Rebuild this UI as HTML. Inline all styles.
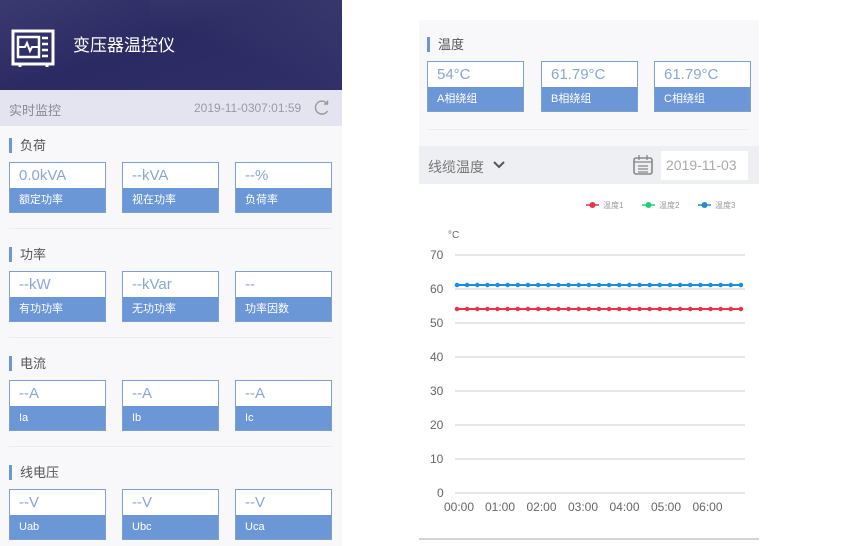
<!DOCTYPE html>
<html><head><meta charset="utf-8"><style>
*{margin:0;padding:0;box-sizing:border-box}
body{width:846px;height:546px;background:#fff;position:relative;overflow:hidden;font-family:"Liberation Sans","Noto Sans CJK SC",sans-serif}
.a{position:absolute}
.box{position:absolute;width:97px;height:51px;border:1px solid #7e9fd0;background:#fff}
.box .v{height:25px;line-height:25px;padding-left:9px;font-size:15px;color:#8aa6d6}
.box .l{position:absolute;left:0;right:0;bottom:0;height:24px;background:#6c97d6;color:#fff;font-size:11px;line-height:24px;padding-left:9px}
.t{position:absolute;font-size:13px;color:#555;padding-left:8px;border-left:3px solid #6c97d6;line-height:15px}
.sep{position:absolute;height:1px;background:#ececf0}
</style></head><body>
<div class="a" style="left:0;top:0;width:342px;height:90px;background:linear-gradient(160deg,#3a3970 0%,#2b2a62 45%,#302f68 100%)"></div>
<div class="a" style="left:150px;top:0;width:200px;height:90px;background:linear-gradient(200deg,rgba(255,255,255,.06),rgba(255,255,255,0) 60%)"></div>
<svg class="a" style="left:11px;top:28px" width="46" height="42" viewBox="0 0 46 42"><rect x="2" y="3" width="40" height="33" fill="none" stroke="#fff" stroke-width="3"/><rect x="7" y="9" width="21" height="20" fill="none" stroke="#fff" stroke-width="2.5"/><path d="M8 19h6l2-4 3 8 2-4h6" fill="none" stroke="#fff" stroke-width="2"/><path d="M31 10h6M31 16h6M31 22h6M31 28h6" stroke="#fff" stroke-width="2.5"/><path d="M9 36v3M36 36v3" stroke="#fff" stroke-width="3"/></svg>
<div class="a" style="left:73px;top:31px;font-size:17px;color:#fff">变压器温控仪</div>
<div class="a" style="left:0;top:90px;width:342px;height:36px;background:#e3e4f0"></div>
<div class="a" style="left:9px;top:100px;font-size:13px;color:#8a8a95">实时监控</div>
<div class="a" style="left:194px;top:101px;font-size:12px;color:#9a9aa5">2019-11-0307:01:59</div>
<svg class="a" style="left:313px;top:99px" width="17" height="17" viewBox="0 0 17 17"><path d="M14 4.5A6.5 6.5 0 1 0 14.5 12" fill="none" stroke="#999" stroke-width="1.4"/><path d="M14.5 1.5v3.5h-3.5" fill="none" stroke="#999" stroke-width="1.4"/></svg>
<div class="a" style="left:0;top:126px;width:342px;height:420px;background:#f8f8fa"></div>

<div class="t" style="left:9px;top:138px">负荷</div>
<div class="box" style="left:9px;top:162px"><div class="v">0.0kVA</div><div class="l">额定功率</div></div>
<div class="box" style="left:122px;top:162px"><div class="v">--kVA</div><div class="l">视在功率</div></div>
<div class="box" style="left:235px;top:162px"><div class="v">--%</div><div class="l">负荷率</div></div>
<div class="sep" style="left:9px;top:228px;width:322px"></div>

<div class="t" style="left:9px;top:247px">功率</div>
<div class="box" style="left:9px;top:271px"><div class="v">--kW</div><div class="l">有功功率</div></div>
<div class="box" style="left:122px;top:271px"><div class="v">--kVar</div><div class="l">无功功率</div></div>
<div class="box" style="left:235px;top:271px"><div class="v">--</div><div class="l">功率因数</div></div>
<div class="sep" style="left:9px;top:337px;width:322px"></div>

<div class="t" style="left:9px;top:356px">电流</div>
<div class="box" style="left:9px;top:380px"><div class="v">--A</div><div class="l">Ia</div></div>
<div class="box" style="left:122px;top:380px"><div class="v">--A</div><div class="l">Ib</div></div>
<div class="box" style="left:235px;top:380px"><div class="v">--A</div><div class="l">Ic</div></div>
<div class="sep" style="left:9px;top:446px;width:322px"></div>

<div class="t" style="left:9px;top:465px">线电压</div>
<div class="box" style="left:9px;top:489px"><div class="v">--V</div><div class="l">Uab</div></div>
<div class="box" style="left:122px;top:489px"><div class="v">--V</div><div class="l">Ubc</div></div>
<div class="box" style="left:235px;top:489px"><div class="v">--V</div><div class="l">Uca</div></div>

<div class="a" style="left:419px;top:20px;width:340px;height:126px;background:#f8f8fa"></div>
<div class="t" style="left:427px;top:37px">温度</div>
<div class="box" style="left:427px;top:61px"><div class="v">54°C</div><div class="l">A相绕组</div></div>
<div class="box" style="left:541px;top:61px"><div class="v">61.79°C</div><div class="l">B相绕组</div></div>
<div class="box" style="left:654px;top:61px"><div class="v">61.79°C</div><div class="l">C相绕组</div></div>
<div class="sep" style="left:427px;top:129px;width:322px"></div>
<div class="a" style="left:419px;top:146px;width:340px;height:38px;background:#eeeff3"></div>
<div class="a" style="left:428px;top:157px;font-size:14px;color:#777">线缆温度</div>
<svg class="a" style="left:493px;top:161px" width="12" height="8"><path d="M1 1l5 5 5-5" fill="none" stroke="#555" stroke-width="2"/></svg>
<svg class="a" style="left:632px;top:154px" width="22" height="22" viewBox="0 0 22 22"><rect x="2" y="4" width="18" height="16" rx="2" fill="none" stroke="#888" stroke-width="1.6"/><path d="M2 8h18M7 1v5M15 1v5M6 12h10M6 15h10M6 18h10" stroke="#888" stroke-width="1.3"/></svg>
<div class="a" style="left:661px;top:151px;width:87px;height:29px;background:#fff;font-size:14px;color:#aaa;line-height:29px;padding-left:5px">2019-11-03</div>

<svg class="a" style="left:419px;top:185px" width="340" height="361" viewBox="419 185 340 361" font-family="Liberation Sans, sans-serif">
<g font-size="8" fill="#999">
<line x1="586" y1="205" x2="599" y2="205" stroke="#e8334a" stroke-width="1.5"/><circle cx="592.5" cy="205" r="3" fill="#e8334a"/><text x="603" y="208">温度1</text>
<line x1="642" y1="205" x2="655" y2="205" stroke="#22d07a" stroke-width="1.5"/><circle cx="648.5" cy="205" r="3" fill="#22d07a"/><text x="659" y="208">温度2</text>
<line x1="698" y1="205" x2="711" y2="205" stroke="#1a8fe0" stroke-width="1.5"/><circle cx="704.5" cy="205" r="3" fill="#1a8fe0"/><text x="715" y="208">温度3</text>
</g>
<g font-size="12" fill="#666">
<text x="448" y="238" font-size="10">°C</text>
<text x="430" y="259">70</text><text x="430" y="293">60</text><text x="430" y="327">50</text><text x="430" y="361">40</text><text x="430" y="395">30</text><text x="430" y="429">20</text><text x="430" y="463">10</text><text x="437" y="497">0</text>
</g>
<g stroke="#ccc" stroke-width="1">
<line x1="455" y1="255" x2="745" y2="255"/><line x1="455" y1="289" x2="745" y2="289"/><line x1="455" y1="323" x2="745" y2="323"/><line x1="455" y1="357" x2="745" y2="357"/><line x1="455" y1="391" x2="745" y2="391"/><line x1="455" y1="425" x2="745" y2="425"/><line x1="455" y1="459" x2="745" y2="459"/><line x1="455" y1="493" x2="745" y2="493"/>
</g>
<line x1="457" y1="285" x2="741" y2="285" stroke="#1a8fe0" stroke-width="2"/>
<line x1="457" y1="285" x2="741" y2="285" stroke="#1a8fe0" stroke-width="4.5" stroke-linecap="round" stroke-dasharray="0 10.14"/>
<line x1="457" y1="309" x2="741" y2="309" stroke="#e8334a" stroke-width="2"/>
<line x1="457" y1="309" x2="741" y2="309" stroke="#e8334a" stroke-width="4.5" stroke-linecap="round" stroke-dasharray="0 10.14"/>
<g font-size="12" fill="#666" text-anchor="middle">
<text x="459" y="511">00:00</text><text x="500" y="511">01:00</text><text x="541.5" y="511">02:00</text><text x="583" y="511">03:00</text><text x="624.5" y="511">04:00</text><text x="666" y="511">05:00</text><text x="707.5" y="511">06:00</text>
</g>
<line x1="419" y1="539" x2="759" y2="539" stroke="#aaa" stroke-width="1"/>
</svg>
</body></html>
